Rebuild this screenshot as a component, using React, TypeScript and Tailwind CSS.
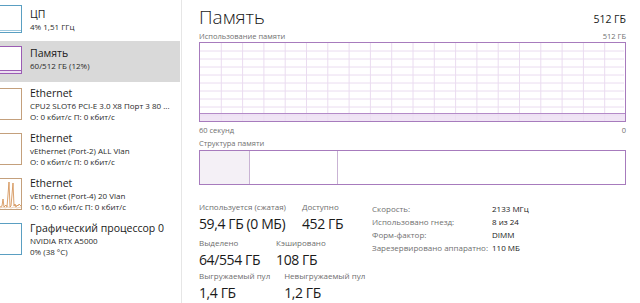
import React from "react";

const font = { fontFamily: '"Open Sans", "Noto Sans", sans-serif' };

function Thumb({ color, h, children }: { color: string; h: string; children?: React.ReactNode }) {
  return (
    <div className={`relative w-[22px] shrink-0 border-y border-r bg-white ${h}`} style={{ borderColor: color }}>
      {children}
    </div>
  );
}

function SideItem({
  title,
  lines,
  color,
  h,
  box,
  pt,
  selected,
  thumb,
}: {
  title: string;
  lines: string[];
  color: string;
  h: string;
  box: string;
  pt: string;
  selected?: boolean;
  thumb?: React.ReactNode;
}) {
  return (
    <div className={`flex shrink-0 gap-[8px] ${h} ${selected ? "bg-[#d9d9d9]" : ""}`}>
      <div className="pt-[5px]">
        <Thumb color={color} h={box}>
          {thumb}
        </Thumb>
      </div>
      <div className={`${pt} leading-none`}>
        <div className="text-[10.5px] leading-[14px] text-[#1a1a1a]">{title}</div>
        {lines.map((l) => (
          <div key={l} className="text-[8px] leading-[11px] text-[#2a2a2a] whitespace-nowrap">
            {l}
          </div>
        ))}
      </div>
    </div>
  );
}

function StatCol({ label, value }: { label: string; value: string }) {
  return (
    <div className="flex flex-col">
      <div className="text-[8px] leading-[12px] text-[#6e6e6e] whitespace-nowrap">{label}</div>
      <div className="mt-[4px] text-[14px] leading-[14px] tracking-[-0.4px] text-[#1a1a1a] whitespace-nowrap">{value}</div>
    </div>
  );
}

export default function App() {
  const vlines = Array.from({ length: 19 }, (_, i) => ((i + 1) * 426) / 20);
  const hlines = Array.from({ length: 9 }, (_, i) => (i + 1) * 8);
  return (
    <div className="flex w-[640px] h-[303px] bg-white overflow-hidden" style={font}>
      <aside className="w-[180px] shrink-0 flex flex-col">
        <SideItem title="ЦП" lines={["4% 1,51 ГГц"]} color="#5a9fc2" h="h-[41px]" box="h-[28px]" pt="pt-[7px]"
          thumb={<div className="absolute bottom-[1px] left-0 right-0 h-[1px] bg-[#9cc8de]" />} />
        <SideItem title="Память" lines={["60/512 ГБ (12%)"]} color="#9b5cb4" h="h-[41px]" box="h-[28px]" pt="pt-[5px]" selected
          thumb={<div className="absolute bottom-0 left-0 right-0 h-[3px] bg-[#ecdff1] border-t border-[#9b5cb4]" />} />
        <div className="h-[1px] shrink-0" />
        <SideItem title="Ethernet" lines={["CPU2 SLOT6 PCI-E 3.0 X8 Порт 3 80 ...", "О: 0 кбит/с П: 0 кбит/с"]} color="#c4a07c" h="h-[45px]" box="h-[32px]" pt="pt-[3px]" />
        <SideItem title="Ethernet" lines={["vEthernet (Port-2) ALL Vlan", "О: 0 кбит/с П: 0 кбит/с"]} color="#c4a07c" h="h-[45px]" box="h-[32px]" pt="pt-[3px]" />
        <SideItem title="Ethernet" lines={["vEthernet (Port-4) 20 Vlan", "О: 16,0 кбит/с П: 0 кбит/с"]} color="#c4a07c" h="h-[45px]" box="h-[32px]" pt="pt-[3px]"
          thumb={
            <svg className="absolute inset-0" width="21" height="30" viewBox="0 0 21 30">
              <polyline fill="none" stroke="#d08a4a" strokeWidth="0.8"
                points="0,28 2,27 3,20 4,28 6,26 7,28 9,3 10,28 11,27 13,4 14,27 15,25 16,28 17,26 18,27 19,25 21,27" />
              <polyline fill="none" stroke="#e2b48a" strokeWidth="0.6"
                points="0,29 3,28 5,29 8,28 11,29 14,28 17,29 21,28" />
            </svg>
          } />
        <SideItem title="Графический процессор 0" lines={["NVIDIA RTX A5000", "0%  (38 °C)"]} color="#5a9fc2" h="h-[45px]" box="h-[32px]" pt="pt-[3px]" />
      </aside>
      <div className="w-[1px] ml-[1px] bg-[#e6e6e6] shrink-0" />
      <main className="flex-1 pl-[17px] pr-[14px] flex flex-col">
        <div className="flex shrink-0 items-end justify-between h-[31px]">
          <div className="text-[19px] leading-[28px] text-[#1a1a1a] font-light">Память</div>
          <div className="text-[10.5px] leading-[14px] mb-[5px] text-[#1a1a1a]">512 ГБ</div>
        </div>
        <div className="flex shrink-0 justify-between text-[7.5px] leading-[11px] text-[#707070]">
          <span>Использование памяти</span>
          <span>512 ГБ</span>
        </div>
        <div className="relative shrink-0 h-[80px] border border-[#a77bbd]">
          <svg className="absolute inset-0" width="424" height="78" viewBox="0 0 424 78">
            {vlines.map((x) => (
              <line key={x} x1={x} y1="0" x2={x} y2="78" stroke="#eadcf0" strokeWidth="1" />
            ))}
            {hlines.map((y) => (
              <line key={y} x1="0" y1={y} x2="424" y2={y} stroke="#eadcf0" strokeWidth="1" />
            ))}
          </svg>
          <div className="absolute left-0 right-0 bottom-0 h-[8px] bg-[#ecdff2]/80 border-t border-[#b48bc8]" />
        </div>
        <div className="flex shrink-0 justify-between text-[7.5px] leading-[14px] mt-[1px] text-[#707070]">
          <span>60 секунд</span>
          <span>0</span>
        </div>
        <div className="shrink-0 text-[7.5px] leading-[12px] text-[#707070]">Структура памяти</div>
        <div className="flex shrink-0 h-[35px] border border-[#a77bbd] mt-[1px]">
          <div className="w-[50px] bg-[#f4f0f6] border-r border-[#c9b3d4]" />
          <div className="w-[88px] border-r border-[#c9b3d4]" />
          <div className="flex-1" />
        </div>
        <div className="flex shrink-0 items-start mt-[16px]">
          <div className="flex flex-col w-[173px]">
            <div className="flex gap-[16px]">
              <StatCol label="Используется (сжатая)" value="59,4 ГБ (0 МБ)" />
              <StatCol label="Доступно" value="452 ГБ" />
            </div>
            <div className="flex gap-[16px] mt-[6px]">
              <StatCol label="Выделено" value="64/554 ГБ" />
              <StatCol label="Кэшировано" value="108 ГБ" />
            </div>
            <div className="flex gap-[14px] mt-[3px]">
              <StatCol label="Выгружаемый пул" value="1,4 ГБ" />
              <StatCol label="Невыгружаемый пул" value="1,2 ГБ" />
            </div>
          </div>
          <div className="grid grid-cols-[120px_auto] content-start text-[8px] leading-[13px] mt-[1px]">
            <span className="text-[#707070]">Скорость:</span>
            <span className="text-[#1a1a1a]">2133 МГц</span>
            <span className="text-[#707070]">Использовано гнезд:</span>
            <span className="text-[#1a1a1a]">8 из 24</span>
            <span className="text-[#707070]">Форм-фактор:</span>
            <span className="text-[#1a1a1a]">DIMM</span>
            <span className="text-[#707070]">Зарезервировано аппаратно:</span>
            <span className="text-[#1a1a1a]">110 МБ</span>
          </div>
        </div>
      </main>
    </div>
  );
}
